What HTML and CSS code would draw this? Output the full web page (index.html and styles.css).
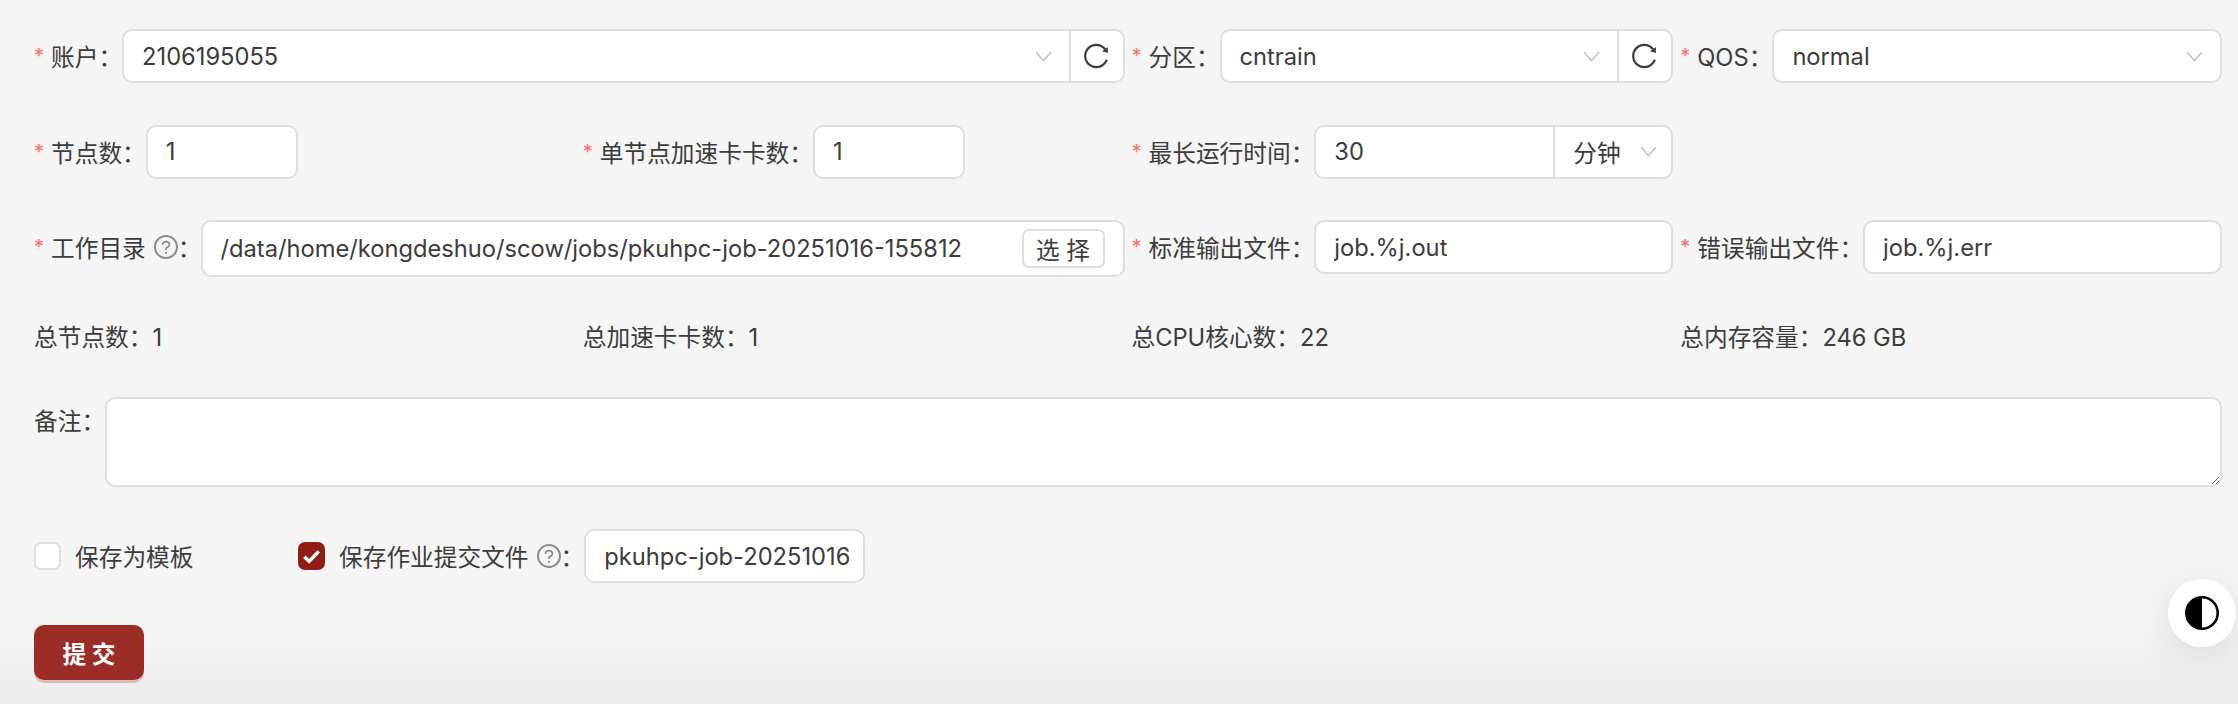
FILE: index.html
```html
<!DOCTYPE html>
<html lang="zh-CN">

<head>
  <meta charset="UTF-8">
  <title>提交作业</title>
  <link rel="stylesheet" href="styles.css">
</head>

<body>
  <svg class="defs" width="0" height="0">
    <symbol id="reload" viewBox="64 64 896 896">
      <path d="M909.1 209.3l-56.4 44.1C775.8 155.1 656.2 92 521.9 92 290 92 102.3 279.5 102 511.5 101.7 743.7 289.8 932 521.9 932c181.3 0 335.8-115 394.6-276.1 1.5-4.2-.7-8.9-4.9-10.3l-56.7-19.5a8 8 0 00-10.1 4.8c-1.8 5-3.8 10-5.9 14.9-17.3 41-42.1 77.8-73.7 109.4A344.77 344.77 0 01655.9 829c-42.3 17.9-87.4 27-133.8 27-46.5 0-91.5-9.1-133.8-27A341.5 341.5 0 01279 755.2a342.16 342.16 0 01-73.7-109.4c-17.9-42.4-27-87.4-27-133.9s9.1-91.5 27-133.9c17.3-41 42.1-77.8 73.7-109.4 31.6-31.6 68.4-56.4 109.3-73.8 42.3-17.9 87.4-27 133.8-27 46.5 0 91.5 9.1 133.8 27a341.5 341.5 0 01109.3 73.8c9.9 9.9 19.2 20.4 27.8 31.4l-60.2 47a8 8 0 003 14.1l175.6 43c5 1.2 9.9-2.6 9.9-7.7l.8-180.9c-.1-6.6-7.8-10.3-13-6.2z" />
    </symbol>
    <symbol id="help" viewBox="64 64 896 896">
      <path d="M512 64C264.6 64 64 264.6 64 512s200.6 448 448 448 448-200.6 448-448S759.4 64 512 64zm0 820c-205.4 0-372-166.6-372-372s166.6-372 372-372 372 166.6 372 372-166.6 372-372 372z" />
      <path d="M623.6 316.7C593.6 290.4 554 276 512 276s-81.6 14.5-111.6 40.7C369.2 344 352 380.7 352 420v7.6c0 4.4 3.6 8 8 8h48c4.4 0 8-3.6 8-8V420c0-44.1 43.1-80 96-80s96 35.9 96 80c0 31.1-22 59.6-56.1 72.7-21.2 8.1-39.2 22.3-52.1 40.9-13.1 19-19.9 41.8-19.9 64.9V620c0 4.4 3.6 8 8 8h48c4.4 0 8-3.6 8-8v-22.7a48.3 48.3 0 0130.9-44.8c59-22.7 97.1-74.7 97.1-132.5.1-39.3-17.1-76-48.3-103.3zM472 732a40 40 0 1080 0 40 40 0 10-80 0z" />
    </symbol>
    <symbol id="chevron" viewBox="0 0 16 10">
      <path d="M1 1l7 8 7-8" fill="none" stroke="currentColor" stroke-width="1.3" />
    </symbol>
  </svg>

  <form class="job-form">
    <div class="row">
      <div class="field span-2">
        <label class="label required">账户：</label>
        <div class="control">
          <div class="select"><span>2106195055</span><svg class="chevron"><use href="#chevron" /></svg></div>
          <button type="button" class="reload"><svg><use href="#reload" /></svg></button>
        </div>
      </div>
      <div class="field">
        <label class="label required">分区：</label>
        <div class="control">
          <div class="select"><span>cntrain</span><svg class="chevron"><use href="#chevron" /></svg></div>
          <button type="button" class="reload"><svg><use href="#reload" /></svg></button>
        </div>
      </div>
      <div class="field">
        <label class="label required">QOS：</label>
        <div class="control">
          <div class="select"><span>normal</span><svg class="chevron"><use href="#chevron" /></svg></div>
        </div>
      </div>
    </div>

    <div class="row">
      <div class="field">
        <label class="label required">节点数：</label>
        <input class="input number" value="1">
      </div>
      <div class="field">
        <label class="label required">单节点加速卡卡数：</label>
        <input class="input number" value="1">
      </div>
      <div class="field">
        <label class="label required">最长运行时间：</label>
        <div class="control">
          <input class="input joined" value="30">
          <div class="select unit"><span>分钟</span><svg class="chevron"><use href="#chevron" /></svg></div>
        </div>
      </div>
    </div>

    <div class="row">
      <div class="field span-2">
        <label class="label required">工作目录<svg class="help"><use href="#help" /></svg>：</label>
        <div class="path">
          <span>/data/home/kongdeshuo/scow/jobs/pkuhpc-job-20251016-155812</span>
          <button type="button" class="small-btn">选 择</button>
        </div>
      </div>
      <div class="field">
        <label class="label required">标准输出文件：</label>
        <input class="input" value="job.%j.out">
      </div>
      <div class="field">
        <label class="label required">错误输出文件：</label>
        <input class="input" value="job.%j.err">
      </div>
    </div>

    <div class="row stats">
      <div>总节点数：1</div>
      <div>总加速卡卡数：1</div>
      <div>总CPU核心数：22</div>
      <div>总内存容量：246 GB</div>
    </div>

    <div class="comment-row">
      <label class="label comment-label">备注：</label>
      <textarea class="comment"></textarea>
    </div>

    <div class="save-row">
      <label class="check first"><span class="box"></span>保存为模板</label>
      <label class="check"><span class="box checked"><svg viewBox="0 0 16 16"><path d="M3 8.5l3.4 3.2L13 4.8" fill="none" stroke="#fff" stroke-width="2.4" /></svg></span>保存作业提交文件<svg class="help"><use href="#help" /></svg>：</label>
      <input class="input file-name" value="pkuhpc-job-20251016">
    </div>

    <button type="button" class="submit">提 交</button>
  </form>

  <button type="button" class="theme-toggle">
    <svg viewBox="0 0 32 32">
      <circle cx="16" cy="16" r="14.8" fill="none" stroke="#000" stroke-width="2.4" />
      <path d="M16 1.2a14.8 14.8 0 000 29.6z" />
    </svg>
  </button>
</body>
</html>
```

FILE: styles.css
```css
* {
  box-sizing: border-box;
}

html,
body {
  height: 100%;
}

body {
  margin: 0;
  overflow: hidden;
  font-family: Inter, "Noto Sans CJK SC", sans-serif;
  font-size: 23.7px;
  color: #3c3c3c;
  background: linear-gradient(#f5f5f5 89%, #ececec);
}

input,
button,
textarea {
  font: inherit;
  color: inherit;
}

.defs {
  position: absolute;
}

.job-form {
  padding: 29px 16px 0 34px;
}

.row {
  display: grid;
  grid-template-columns: repeat(4, 1fr);
  column-gap: 7px;
  margin-bottom: 41.5px;
}

.field {
  display: flex;
  align-items: center;
  min-width: 0;
}

.span-2 {
  grid-column: span 2;
}

.label {
  flex: none;
  display: flex;
  align-items: center;
  white-space: nowrap;
}

.required::before {
  content: "*";
  width: 17px;
  color: #ff6b6b;
  font-size: 20px;
}

.control {
  flex: 1;
  display: flex;
  min-width: 0;
  height: 54px;
  background: #fff;
  border: 2px solid #dedede;
  border-radius: 10px;
}

.select {
  flex: 1;
  display: flex;
  align-items: center;
  justify-content: space-between;
  min-width: 0;
  padding: 0 17px 0 18px;
}

.chevron {
  width: 17px;
  height: 11px;
  color: #bdbdbd;
}

.reload {
  flex: none;
  display: flex;
  align-items: center;
  justify-content: center;
  width: 54px;
  padding: 0 2px 0 0;
  background: none;
  border: 0;
  border-left: 2px solid #dedede;
}

.reload svg {
  width: 26px;
  height: 26px;
  fill: #3c3c3c;
}

.input {
  flex: 1;
  min-width: 0;
  height: 54px;
  padding: 0 18px;
  background: #fff;
  border: 2px solid #dedede;
  border-radius: 10px;
  outline: none;
}

.number {
  flex: none;
  width: 152px;
}

.joined {
  height: 50px;
  border: 0;
  border-right: 2px solid #dedede;
  border-radius: 8px 0 0 8px;
}

.unit {
  flex: none;
  width: 116px;
  padding: 0 14px 0 18px;
}

.path {
  flex: 1;
  display: flex;
  align-items: center;
  justify-content: space-between;
  height: 57px;
  padding: 0 18px 0 17px;
  background: #fff;
  border: 2px solid #dedede;
  border-radius: 10px;
  margin-bottom: -3px;
}

.small-btn {
  width: 83px;
  height: 39px;
  padding: 0;
  background: #fff;
  border: 2px solid #dedede;
  border-radius: 7px;
  box-shadow: 0 3px 0 rgba(0, 0, 0, 0.02);
}

.help {
  width: 24px;
  height: 24px;
  margin-left: 8px;
  fill: #8c8c8c;
}

.stats {
  height: 54px;
  align-items: center;
  margin-top: -7px;
  margin-bottom: 34.5px;
}

.comment-row {
  display: flex;
  margin-bottom: 42px;
}

.comment-label {
  height: 46px;
}

.comment {
  flex: 1;
  height: 90px;
  background: #fff;
  border: 2px solid #dedede;
  border-radius: 10px;
  outline: none;
}

.save-row {
  display: flex;
  align-items: center;
  margin-bottom: 42px;
}

.check {
  display: flex;
  align-items: center;
}

.first {
  width: 264px;
}

.box {
  flex: none;
  display: flex;
  width: 27px;
  height: 28px;
  margin-right: 14px;
  background: #fff;
  border: 2px solid #dedede;
  border-radius: 7px;
}

.checked {
  background: #8f1d14;
  border-color: #8f1d14;
}

.file-name {
  flex: none;
  width: 281px;
  padding-right: 12px;
}

.submit {
  display: block;
  width: 110px;
  height: 55px;
  padding: 0;
  color: #fff;
  font-weight: 700;
  background: #9b2d26;
  border: 0;
  border-radius: 10px;
  box-shadow: 0 3px 0 rgba(155, 45, 38, 0.25);
}

.theme-toggle {
  position: fixed;
  right: 2px;
  bottom: 57px;
  display: flex;
  align-items: center;
  justify-content: center;
  width: 68px;
  height: 68px;
  padding: 0;
  background: #fff;
  border: 0;
  border-radius: 50%;
  box-shadow: 0 9px 40px rgba(0, 0, 0, 0.1);
}

.theme-toggle svg {
  width: 34px;
  height: 34px;
}
```
